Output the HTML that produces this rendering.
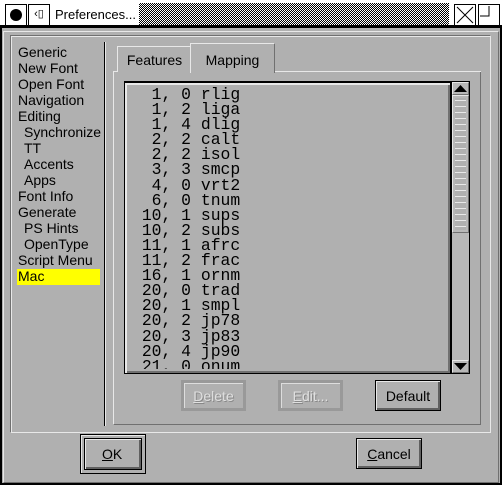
<!DOCTYPE html>
<html><head><style>
*{margin:0;padding:0;box-sizing:border-box}
body{width:502px;height:485px;background:#b0b0b0;position:relative;overflow:hidden;font-family:"Liberation Sans",sans-serif;font-size:14px;color:#000}
.a{position:absolute}
.title{left:0;top:0;width:502px;height:28px;background:#fff;border-bottom:3px solid #000}
.hatch{left:139px;top:3px;width:310px;height:22px;background:repeating-conic-gradient(#000 0 25%,#fff 0 50%) 0 0/2px 2px}
.tb{top:4px;width:22px;height:22px;border:1px solid #000;background:#fff}
.rl{border-top:1px solid #e8e8e8;border-left:1px solid #e8e8e8;border-right:1px solid #707070;border-bottom:1px solid #707070}
.sk{border-top:1px solid #707070;border-left:1px solid #707070;border-right:1px solid #e8e8e8;border-bottom:1px solid #e8e8e8}
.btn{border:1px solid #000;box-shadow:inset 1px 1px 0 #e8e8e8,inset -2px -2px 0 #606060;text-align:center;line-height:28px}
.dis{color:#e0e0e0;text-shadow:1px 1px 0 #888;background:#b0b0b0;border:3px solid #999;box-shadow:inset 1px 1px 0 #ddd;text-align:center;line-height:26px}
.li{left:18px;line-height:16px}
.li span{padding-left:6px}
pre{font-family:"Liberation Mono",monospace;font-size:16.4px;line-height:15.1px}
</style></head><body>
<div class="a" style="left:0;top:0;width:502px;height:485px;border:2px solid #000;border-top:0"></div>
<div class="a title"></div>
<div class="a hatch"></div>
<div class="a tb" style="left:5px"><div class="a" style="left:4px;top:4px;width:12px;height:12px;border-radius:50%;background:#000"></div></div>
<div class="a tb" style="left:28px;font-size:11px;line-height:18px;text-align:center">&lsaquo;▯</div>
<div class="a" style="left:55px;top:7px;font-size:13px">Preferences...</div>
<div class="a tb" style="left:454px;width:22px"><svg width="20" height="20"><path d="M2 2L18 18M18 2L2 18" stroke="#000"/></svg></div>
<div class="a tb" style="left:478px;width:22px"><svg width="20" height="20"><path d="M1 11H10V1" stroke="#000" fill="none"/></svg></div>
<div class="a rl" style="left:3px;top:31px;width:496px;height:452px"></div>
<div class="a sk" style="left:10px;top:35px;width:481px;height:398px"></div>
<div class="a rl" style="left:11px;top:36px;width:479px;height:396px;border-right:0;border-bottom:0"></div>
<div class="a" style="left:104px;top:42px;width:2px;height:384px;background:#000;border-right:1px solid #e8e8e8"></div>
<div class="a" style="left:17px;top:269px;width:83px;height:16px;background:#ff0"></div>
<div class="a li" style="top:44px">Generic<br>New Font<br>Open Font<br>Navigation<br>Editing<br><span>Synchronize</span><br><span>TT</span><br><span>Accents</span><br><span>Apps</span><br>Font Info<br>Generate<br><span>PS Hints</span><br><span>OpenType</span><br>Script Menu<br>Mac</div>
<div class="a rl" style="left:113px;top:72px;width:368px;height:353px;border-top:0"></div>
<div class="a" style="left:113px;top:71px;width:5px;height:1px;background:#e8e8e8"></div>
<div class="a" style="left:275px;top:71px;width:206px;height:1px;background:#e8e8e8"></div>
<div class="a rl" style="left:117px;top:46px;width:74px;height:26px;border-bottom:0;border-right:0;text-align:center;line-height:26px">Features</div>
<div class="a rl" style="left:190px;top:43px;width:85px;height:30px;border-bottom:0;background:#b0b0b0;text-align:center;line-height:32px">Mapping</div>
<div class="a" style="left:124px;top:81px;width:327px;height:293px;border:1px solid #000;border-top:2px solid #000;box-shadow:inset 2px 2px 0 #e8e8e8,inset -2px -2px 0 #707070"></div>
<div class="a" style="left:130px;top:86px;width:316px;height:283px;overflow:hidden"><pre style="margin-left:2px;margin-top:1px">  1, 0 rlig
  1, 2 liga
  1, 4 dlig
  2, 2 calt
  2, 2 isol
  3, 3 smcp
  4, 0 vrt2
  6, 0 tnum
 10, 1 sups
 10, 2 subs
 11, 1 afrc
 11, 2 frac
 16, 1 ornm
 20, 0 trad
 20, 1 smpl
 20, 2 jp78
 20, 3 jp83
 20, 4 jp90
 21, 0 onum</pre></div>
<div class="a" style="left:451px;top:81px;width:19px;height:293px;border:1px solid #000;background:#b8b8b8"></div>
<div class="a rl" style="left:452px;top:82px;width:17px;height:13px"><svg class="a" width="15" height="11"><path d="M1 9H14L7.5 2Z"/></svg></div>
<div class="a rl" style="left:452px;top:95px;width:17px;height:138px;background:repeating-linear-gradient(#b0b0b0 0 4px,#e8e8e8 4px 5px,#b0b0b0 5px 6px) 0 0/100% 6px;background-clip:content-box;padding:2px 2px"></div>
<div class="a rl" style="left:452px;top:360px;width:17px;height:13px"><svg class="a" width="15" height="11"><path d="M1 2H14L7.5 9Z"/></svg></div>
<div class="a dis" style="left:181px;top:380px;width:65px;height:31px"><u>D</u>elete</div>
<div class="a dis" style="left:278px;top:380px;width:65px;height:31px"><u>E</u>dit...</div>
<div class="a btn" style="left:375px;top:380px;width:66px;height:31px;line-height:30px">Default</div>
<div class="a" style="left:80px;top:434px;width:66px;height:40px;border:1px solid #000;box-shadow:inset 1px 1px 0 #e8e8e8"></div>
<div class="a btn" style="left:84px;top:438px;width:58px;height:32px;line-height:30px;text-align:left;padding-left:17px"><u>O</u>K</div>
<div class="a btn" style="left:356px;top:438px;width:66px;height:31px;line-height:30px"><u>C</u>ancel</div>
</body></html>
